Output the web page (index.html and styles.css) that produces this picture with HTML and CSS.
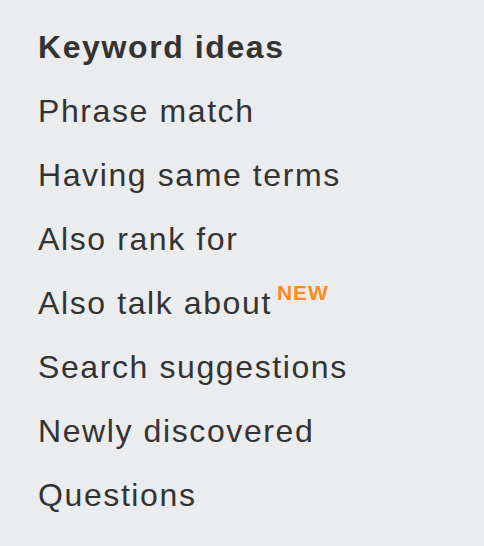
FILE: index.html
```html
<!DOCTYPE html>
<html>
<head>
<meta charset="utf-8">
<link rel="stylesheet" href="styles.css">
</head>
<body>
<nav class="menu">
  <div class="item title">Keyword ideas</div>
  <div class="item">Phrase match</div>
  <div class="item">Having same terms</div>
  <div class="item">Also rank for</div>
  <div class="item">Also talk about<sup class="badge">NEW</sup></div>
  <div class="item">Search suggestions</div>
  <div class="item">Newly discovered</div>
  <div class="item">Questions</div>
</nav>
</body>
</html>
```
FILE: styles.css
```css
html, body {
  margin: 0;
  padding: 0;
  background: #ebecee;
}
body {
  font-family: "Liberation Sans", Arial, sans-serif;
  color: #333333;
  width: 484px;
  height: 546px;
  overflow: hidden;
}
.menu {
  display: flex;
  flex-direction: column;
  padding: 15px 0 0 38px;
}
.item {
  font-size: 32px;
  line-height: 64px;
  height: 64px;
  letter-spacing: 1.6px;
  white-space: nowrap;
}
.title {
  font-weight: bold;
}
.badge {
  color: #ff8a1e;
  font-weight: bold;
  font-size: 21px;
  letter-spacing: 1px;
  vertical-align: top;
  line-height: 1;
  position: relative;
  top: 11px;
  margin-left: 5px;
}
```
